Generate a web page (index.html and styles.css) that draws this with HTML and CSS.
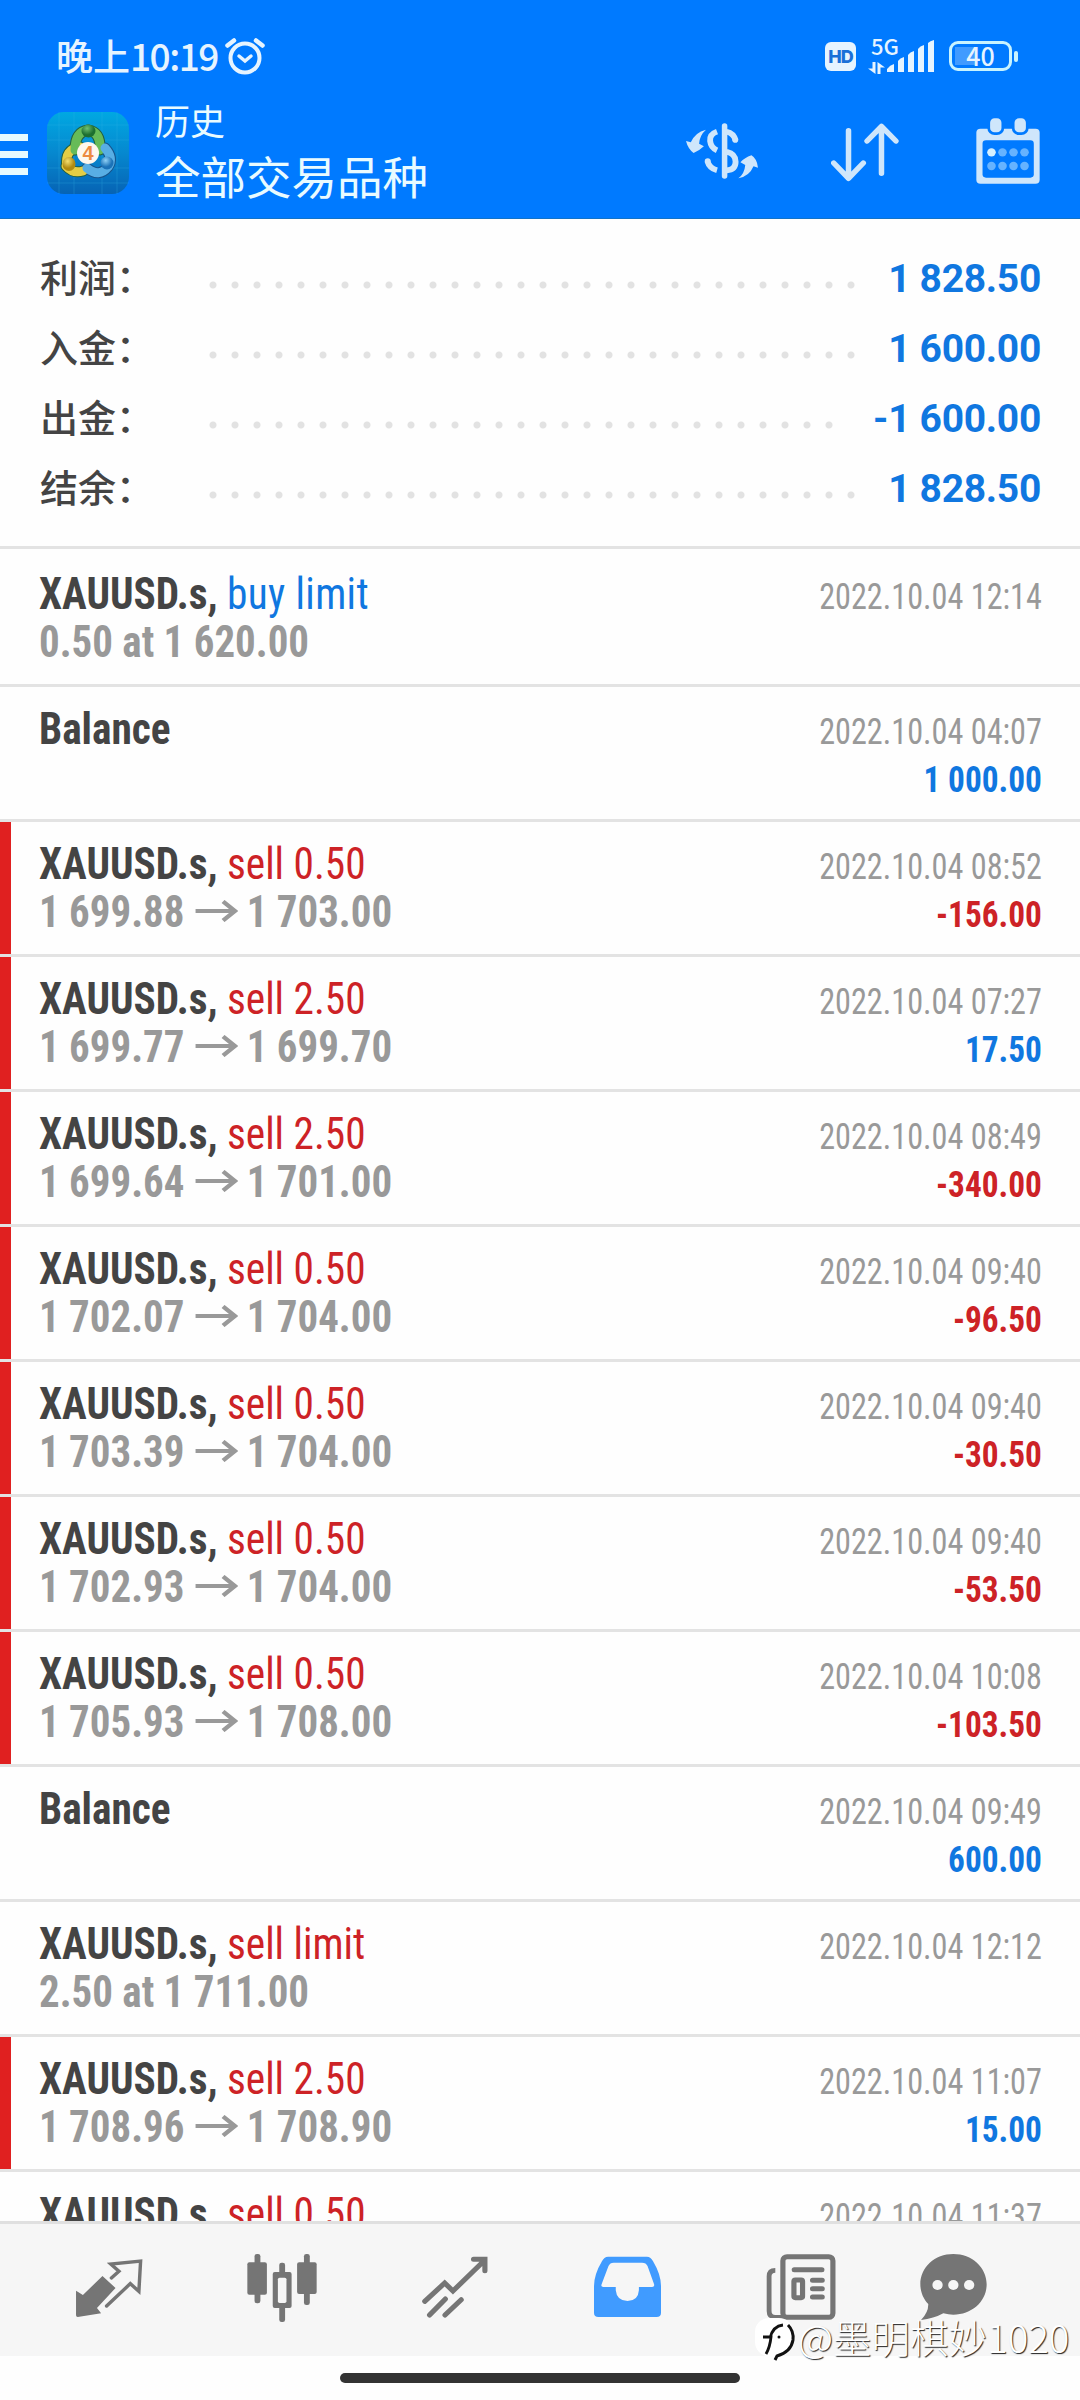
FILE: index.html
```html
<!DOCTYPE html>
<html lang="zh-CN">
<head>
<meta charset="utf-8">
<title>历史</title>
<link rel="stylesheet" href="styles.css">
</head>
<body>
<header class="header">
  <div class="status">
    <span class="clock">晚上<span class="digits">10:19</span></span>
    <svg class="alarm" width="40" height="38" viewBox="0 0 40 38" fill="none" stroke="#e6f4ff" stroke-linecap="round"><circle cx="20" cy="21" r="14.5" stroke-width="4"/><path d="M2.500 8.500 9 3.500M37.500 8.500 31 3.500" stroke-width="4.500"/><path d="m14 19 6 5 6-5" stroke-width="3.500"/></svg>
    <div class="status-right">
      <span class="hd">HD</span>
      <span class="net"><span class="net-label">5G</span><svg width="17" height="12" viewBox="0 0 17 12" fill="#e6f4ff"><path d="M4.500 0h3v12L0 6.500h4.500zM9.500 12h3V5.500H17L9.500 0z"/></svg></span>
      <svg class="bars" width="48" height="32" viewBox="0 0 48 32" fill="#e6f4ff"><path d="M0 32v-3q3-4 7-5v8zM11 32V21q2-3 6-4v15zM21 32V15q2-3 6-4v21zM31 32V9q2-3 6-4v27zM41 32V3q2-2 6-3v32z"/></svg>
      <span class="battery"><span class="battery-num">40</span></span><span class="nub"></span>
    </div>
  </div>
  <div class="toolbar">
    <div class="menu"><i></i><i></i><i></i></div>
    <svg class="logo" width="82" height="82" viewBox="0 0 82 82">
      <defs>
        <linearGradient id="bg" x1="0" y1="0" x2="0" y2="1"><stop offset="0" stop-color="#00a8e2"/><stop offset=".5" stop-color="#0688cf"/><stop offset="1" stop-color="#0663b4"/></linearGradient>
        <radialGradient id="g" cx=".4" cy=".3"><stop offset="0" stop-color="#6fc070"/><stop offset="1" stop-color="#1d6f30"/></radialGradient>
        <radialGradient id="y" cx=".4" cy=".3"><stop offset="0" stop-color="#f5e070"/><stop offset="1" stop-color="#b08a10"/></radialGradient>
        <radialGradient id="b" cx=".4" cy=".3"><stop offset="0" stop-color="#8fd0f5"/><stop offset="1" stop-color="#1b72b8"/></radialGradient>
      </defs>
      <rect width="82" height="82" rx="17" fill="url(#bg)"/>
      <path d="M12 0v82M27 0v82M55 0v82M70 0v82M0 13h82M0 28h82M0 56h82M0 71h82" stroke="#36b6e8" stroke-width=".6" opacity=".45"/>
      <g fill="none" stroke-linecap="round">
        <path d="M20 55q-3-18 13-20M19 54q7 8 17 5" stroke="#24603f" stroke-width="11"/>
        <path d="M28 38q0-18 13-20 13 2 12 20" stroke="#24603f" stroke-width="11"/>
        <path d="M40 56q12 10 21-1 6-9-3-19" stroke="#17548c" stroke-width="11"/>
        <path d="M20 55q-3-18 13-20M19 54q7 8 17 5" stroke="#e3cd45" stroke-width="9"/>
        <path d="M28 38q0-18 13-20 13 2 12 20" stroke="#66bb58" stroke-width="9"/>
        <path d="M40 56q12 10 21-1 6-9-3-19" stroke="#58aee4" stroke-width="9"/>
      </g>
      <ellipse cx="41.500" cy="19" rx="7" ry="6.500" fill="url(#g)"/>
      <ellipse cx="22" cy="52" rx="6.500" ry="7" fill="url(#y)"/>
      <ellipse cx="60" cy="51" rx="6.500" ry="6.500" fill="url(#b)"/>
      <circle cx="41" cy="41" r="11" fill="#fdf7ee"/>
      <text x="41" y="48" class="logo-num">4</text>
    </svg>
    <div class="titles"><div class="t1">历史</div><div class="t2">全部交易品种</div></div>
    <div class="actions">
      <svg class="a1" width="72" height="66" viewBox="424 355 209 198" preserveAspectRatio="none" fill="#cfe6fb"><path d="M482 390q-18 16-20 42l14 8q-12 12-30 20-16-12-22-36l14 4q12-30 44-38zM576 536q18-14 20-40l-14-8q12-14 32-21 16 10 19 37l-13-4q-12 30-44 36z"/><rect x="528" y="371" width="16" height="166" rx="8"/><path d="M514 396q-22 8-20 28 2 20 20 28M486 484q6 22 28 28M542 396q20 4 26 26M542 456q26 6 26 30t-26 26" fill="none" stroke="#cfe6fb" stroke-width="17" stroke-linecap="butt"/><circle cx="487" cy="484" r="8.500"/><circle cx="567" cy="421" r="8.500"/></svg>
      <svg class="a2" width="68" height="66" viewBox="845 355 198 198" preserveAspectRatio="none" fill="none" stroke="#cfe6fb" stroke-width="16" stroke-linecap="round" stroke-linejoin="round"><path d="M896 393v142M853 490l43 46 43-46M992 521V380M950 424l42-44 42 44"/></svg>
      <svg class="a3" width="64" height="66" viewBox="1267 355 186 198" preserveAspectRatio="none"><path d="M1280 387h160q12 0 12 12v141q0 12-12 12h-160q-12 0-12-12V399q0-12 12-12z" fill="#cfe6fb"/><rect x="1286" y="422" width="149" height="112" rx="10" fill="#007aff"/><g fill="#cfe6fb" stroke="#007aff" stroke-width="8"><rect x="1304" y="352" width="41" height="50" rx="17"/><rect x="1375" y="352" width="41" height="50" rx="17"/></g><g fill="#66b3ff"><circle cx="1312" cy="458" r="12.500" fill="#d5f0ff"/><circle cx="1344" cy="458" r="12.500"/><circle cx="1376" cy="458" r="12.500"/><circle cx="1408" cy="458" r="12.500"/><circle cx="1312" cy="499" r="12.500"/><circle cx="1344" cy="499" r="12.500"/><circle cx="1376" cy="499" r="12.500"/><circle cx="1408" cy="499" r="12.500"/></g></svg>
    </div>
  </div>
</header>
<section class="summary">
  <div class="sum"><span class="label">利润：</span><span class="dots"></span><span class="value">1 828.50</span></div>
  <div class="sum"><span class="label">入金：</span><span class="dots"></span><span class="value">1 600.00</span></div>
  <div class="sum"><span class="label">出金：</span><span class="dots"></span><span class="value">-1 600.00</span></div>
  <div class="sum"><span class="label">结余：</span><span class="dots"></span><span class="value">1 828.50</span></div>
</section>
<svg width="0" height="0" class="defs"><symbol id="arrow" viewBox="0 0 40 22" preserveAspectRatio="none"><path d="M0 11h37M26 1.500l11 9.500-11 9.500" fill="none" stroke="#999" stroke-width="4.200"/></symbol></svg>
<main class="list">
  <div class="row first"><div class="left"><div class="name"><b>XAUUSD.s,</b> <span class="buy">buy limit</span></div><div class="price">0.50 at 1 620.00</div></div><div class="right"><div class="time">2022.10.04 12:14</div></div></div>
  <div class="row"><div class="left"><div class="name"><b>Balance</b></div></div><div class="right"><div class="time">2022.10.04 04:07</div><div class="amt pos">1 000.00</div></div></div>
  <div class="row loss"><div class="left"><div class="name"><b>XAUUSD.s,</b> <span class="sell">sell 0.50</span></div><div class="price">1 699.88<svg class="arrow"><use href="#arrow"/></svg>1 703.00</div></div><div class="right"><div class="time">2022.10.04 08:52</div><div class="amt neg">-156.00</div></div></div>
  <div class="row loss"><div class="left"><div class="name"><b>XAUUSD.s,</b> <span class="sell">sell 2.50</span></div><div class="price">1 699.77<svg class="arrow"><use href="#arrow"/></svg>1 699.70</div></div><div class="right"><div class="time">2022.10.04 07:27</div><div class="amt pos">17.50</div></div></div>
  <div class="row loss"><div class="left"><div class="name"><b>XAUUSD.s,</b> <span class="sell">sell 2.50</span></div><div class="price">1 699.64<svg class="arrow"><use href="#arrow"/></svg>1 701.00</div></div><div class="right"><div class="time">2022.10.04 08:49</div><div class="amt neg">-340.00</div></div></div>
  <div class="row loss"><div class="left"><div class="name"><b>XAUUSD.s,</b> <span class="sell">sell 0.50</span></div><div class="price">1 702.07<svg class="arrow"><use href="#arrow"/></svg>1 704.00</div></div><div class="right"><div class="time">2022.10.04 09:40</div><div class="amt neg">-96.50</div></div></div>
  <div class="row loss"><div class="left"><div class="name"><b>XAUUSD.s,</b> <span class="sell">sell 0.50</span></div><div class="price">1 703.39<svg class="arrow"><use href="#arrow"/></svg>1 704.00</div></div><div class="right"><div class="time">2022.10.04 09:40</div><div class="amt neg">-30.50</div></div></div>
  <div class="row loss"><div class="left"><div class="name"><b>XAUUSD.s,</b> <span class="sell">sell 0.50</span></div><div class="price">1 702.93<svg class="arrow"><use href="#arrow"/></svg>1 704.00</div></div><div class="right"><div class="time">2022.10.04 09:40</div><div class="amt neg">-53.50</div></div></div>
  <div class="row loss"><div class="left"><div class="name"><b>XAUUSD.s,</b> <span class="sell">sell 0.50</span></div><div class="price">1 705.93<svg class="arrow"><use href="#arrow"/></svg>1 708.00</div></div><div class="right"><div class="time">2022.10.04 10:08</div><div class="amt neg">-103.50</div></div></div>
  <div class="row"><div class="left"><div class="name"><b>Balance</b></div></div><div class="right"><div class="time">2022.10.04 09:49</div><div class="amt pos">600.00</div></div></div>
  <div class="row"><div class="left"><div class="name"><b>XAUUSD.s,</b> <span class="sell">sell limit</span></div><div class="price">2.50 at 1 711.00</div></div><div class="right"><div class="time">2022.10.04 12:12</div></div></div>
  <div class="row loss"><div class="left"><div class="name"><b>XAUUSD.s,</b> <span class="sell">sell 2.50</span></div><div class="price">1 708.96<svg class="arrow"><use href="#arrow"/></svg>1 708.90</div></div><div class="right"><div class="time">2022.10.04 11:07</div><div class="amt pos">15.00</div></div></div>
  <div class="row"><div class="left"><div class="name"><b>XAUUSD.s,</b> <span class="sell">sell 0.50</span></div></div><div class="right"><div class="time">2022.10.04 11:37</div></div></div>
</main>
<nav class="nav">
  <a class="tab"><svg width="68" height="76" viewBox="216 300 198 228" preserveAspectRatio="none"><path d="M219 422l20 13 57-57 38 36-54 60 12 16-68 11q-5 0-5-5z" fill="#757575"/><path d="M322 384l22-20-24-22 87-9-5 91-25-23-69 67" fill="none" stroke="#757575" stroke-width="10" stroke-linecap="round"/></svg></a>
  <a class="tab"><svg width="70" height="76" viewBox="714 300 204 228" preserveAspectRatio="none" fill="#757575"><rect x="736" y="312" width="17" height="148" rx="7"/><rect x="715" y="337" width="57" height="97" rx="6"/><rect x="880" y="312" width="17" height="153" rx="7"/><rect x="860" y="337" width="57" height="95" rx="6"/><rect x="808" y="338" width="17" height="178" rx="7"/><rect x="789" y="366" width="55" height="108" rx="6"/><rect x="804" y="383" width="25" height="76" rx="5" fill="#f6f6f6"/></svg></a>
  <a class="tab"><svg width="66" height="76" viewBox="1223 300 192 228" preserveAspectRatio="none" fill="none" stroke="#757575" stroke-width="15" stroke-linecap="round"><path d="M1231 454l58-55 24 24 90-90M1373 328h33v34M1245 495l46-48M1290 495l47-46" stroke-linejoin="miter"/></svg></a>
  <a class="tab"><svg width="67" height="76" viewBox="157 300 194 228" preserveAspectRatio="none"><path d="M198 320h112q12 0 18 14 23 40 23 74v80q0 13-13 13H170q-13 0-13-13v-80q0-34 23-74 6-14 18-14z" fill="#409bff"/><path d="M214 338h82q12 0 16 10l19 55q2 8-6 8h-38v10q-2 32-33 32t-34-32v-10h-36q-8 0-5-8l20-55q4-10 15-10z" fill="#f6f6f6"/></svg></a>
  <a class="tab"><svg width="70" height="76" viewBox="657 300 203 228" preserveAspectRatio="none" fill="none" stroke="#757575" stroke-width="15"><rect x="706" y="320" width="145" height="182" rx="12"/><path d="M684 361q-18 0-18 18v104q0 19 18 19h26" stroke-width="14"/><path d="M739 359h80" stroke-linecap="round"/><path d="M792 391h28M792 416h28M792 441h28" stroke-linecap="round"/><rect x="738" y="390" width="25" height="53" rx="4"/></svg></a>
  <a class="tab last"><svg width="67" height="76" viewBox="1102 300 195 228" preserveAspectRatio="none"><path d="M1199 312c54 0 97 40 97 91s-43 91-97 91q-14 0-29-4-28 16-65 20 22-24 21-48c-14-15-23-36-23-59 0-51 42-91 96-91z" fill="#757575"/><g fill="#f6f6f6"><circle cx="1153" cy="405" r="15"/><circle cx="1199" cy="405" r="15"/><circle cx="1245" cy="405" r="15"/></g></svg></a>
</nav>
<footer class="home"><span class="pill"></span></footer>
<div class="mark">
  <svg width="42" height="48" viewBox="0 0 42 48" fill="none"><rect x="0" y="2" width="38" height="38" rx="14" fill="#fff"/><path d="M8 21h8q-1 10-5 17M15 22q3-12 13-13" stroke="#111" stroke-width="2.800"/><path d="M33 9q6 6 5 15-2 12-16 16l-2 4" stroke="#111" stroke-width="3"/><circle cx="24" cy="21" r="1.500" fill="#111"/></svg><span>@墨明棋妙1020</span>
</div>
</body>
</html>
```
FILE: styles.css
```css
* { box-sizing: border-box; }
body {
  margin: 0;
  width: 1080px;
  height: 2400px;
  overflow: hidden;
  position: relative;
  display: flex;
  flex-direction: column;
  background: #fefefe;
  font-family: Roboto, "Noto Sans CJK SC", sans-serif;
}
svg { display: block; flex: none; }
.header { height: 219px; flex: none; background: #007aff; border-bottom: 1px solid #1273c8; }
.status { height: 87px; padding: 26px 62px 1px 56px; display: flex; align-items: center; color: #e6f4ff; }
.clock { font: 500 37px/58px "Noto Sans CJK SC", sans-serif; white-space: nowrap; padding-bottom: 2px; }
.digits { letter-spacing: -1.5px; }
.alarm { margin-left: 7px; }
.status-right { margin-left: auto; display: flex; align-items: center; }
.hd { width: 31px; height: 29px; border-radius: 6px; background: #e6f4ff; color: #1a70d8; font: 800 18px/29px Inter, sans-serif; text-align: center; letter-spacing: -1px; }
.net { width: 31px; margin-left: 12px; height: 36px; display: flex; flex-direction: column; justify-content: space-between; }
.net-label { font: 500 22px/15px "Noto Sans CJK SC", sans-serif; padding-left: 3px; }
.bars { margin-left: -12px; }
.battery { margin-left: 14px; width: 63px; height: 30px; border: 3px solid #c8f4ff; border-radius: 9px; background: linear-gradient(#409bff, #409bff) 3px 3px / 20px 18px no-repeat; font: 500 25px/23px "Noto Sans CJK SC", sans-serif; text-align: center; }
.nub { width: 4px; height: 11px; margin-left: 2px; border-radius: 2px; background: #c8f4ff; }
.toolbar { height: 131px; padding-right: 40px; display: flex; align-items: center; color: #e9fbff; }
.menu { width: 28px; display: flex; flex-direction: column; gap: 10px; padding-top: 3px; }
.menu i { height: 7px; background: #e6faff; }
.logo { margin-left: 19px; }
.logo-num { font: bold 20px "Liberation Sans", sans-serif; fill: #ec8a40; text-anchor: middle; }
.titles { margin-left: 26px; padding-top: 1px; font-family: "Noto Sans CJK SC", sans-serif; }
.t1 { font-size: 35px; line-height: 44px; }
.t2 { font-size: 45.500px; line-height: 67px; }
.actions { margin-left: auto; display: flex; padding-bottom: 3px; }
.a2 { margin-left: 73px; }
.a3 { margin-left: 77px; }
.summary { flex: none; height: 330px; padding: 24px 39px 0 40px; border-bottom: 3px solid #e3e3e3; }
.sum { display: flex; align-items: center; height: 70px; line-height: 70px; font-size: 39px; }
.label { width: 162px; padding-bottom: 4px; line-height: 66px; font-family: "Noto Sans CJK SC", sans-serif; font-size: 38px; font-weight: 500; color: #444; }
.dots { flex: 1; height: 8px; margin: 14px 28px 0 0; background: radial-gradient(circle at center, #e2e2e2 3px, transparent 4px) 0 0 / 22px 8px repeat-x; }
.value { font-weight: 700; color: #1077e0; letter-spacing: -.3px; padding-top: 1px; }
.defs { position: absolute; }
.list { flex: none; height: 1672px; overflow: hidden; font-family: "Roboto Condensed", Roboto, sans-serif; font-stretch: 75%; }
.row { height: 135px; border-bottom: 3px solid #e3e3e3; padding: 18px 38px 0 39px; display: flex; justify-content: space-between; white-space: nowrap; }
.first { height: 138px; padding-top: 21px; }
.loss { background: linear-gradient(#e02020, #e02020) 0 0 / 11px 100% no-repeat; }
.name, .price { font-size: 44px; line-height: 48px; transform-origin: left; }
.name { color: #444; transform: scaleX(.938); }
.price { color: #999; font-weight: 700; transform: scaleX(.93); }
.right { text-align: right; padding-top: 3px; font-size: 36px; line-height: 48px; }
.time { color: #999; transform: scaleX(.895); transform-origin: right; }
.amt { font-weight: 700; transform: scaleX(.925); transform-origin: right; }
.buy, .pos { color: #1077e0; }
.buy { letter-spacing: .4px; }
.sell, .neg { color: #cd2226; }
.arrow { display: inline-block; width: 46px; height: 22px; margin: 0 9px 0 12px; vertical-align: 5px; }
.nav { flex: none; height: 135px; border-top: 3px solid #e0e0e0; background: #f6f6f6; display: flex; padding: 0 0 4px 22px; }
.tab { width: 173px; display: flex; align-items: center; justify-content: center; }
.last { width: 132px; }
.home { height: 44px; display: flex; justify-content: center; padding-top: 17px; }
.pill { width: 400px; height: 10px; border-radius: 5px; background: #333; }
.mark { position: absolute; left: 755px; top: 2316px; display: flex; align-items: center; font: 300 38.500px/44px "Noto Sans CJK SC", sans-serif; color: #fff; text-shadow: 1px 1px 1px #222; white-space: nowrap; }
.mark span { margin: -9px 0 0 1px; }
```
